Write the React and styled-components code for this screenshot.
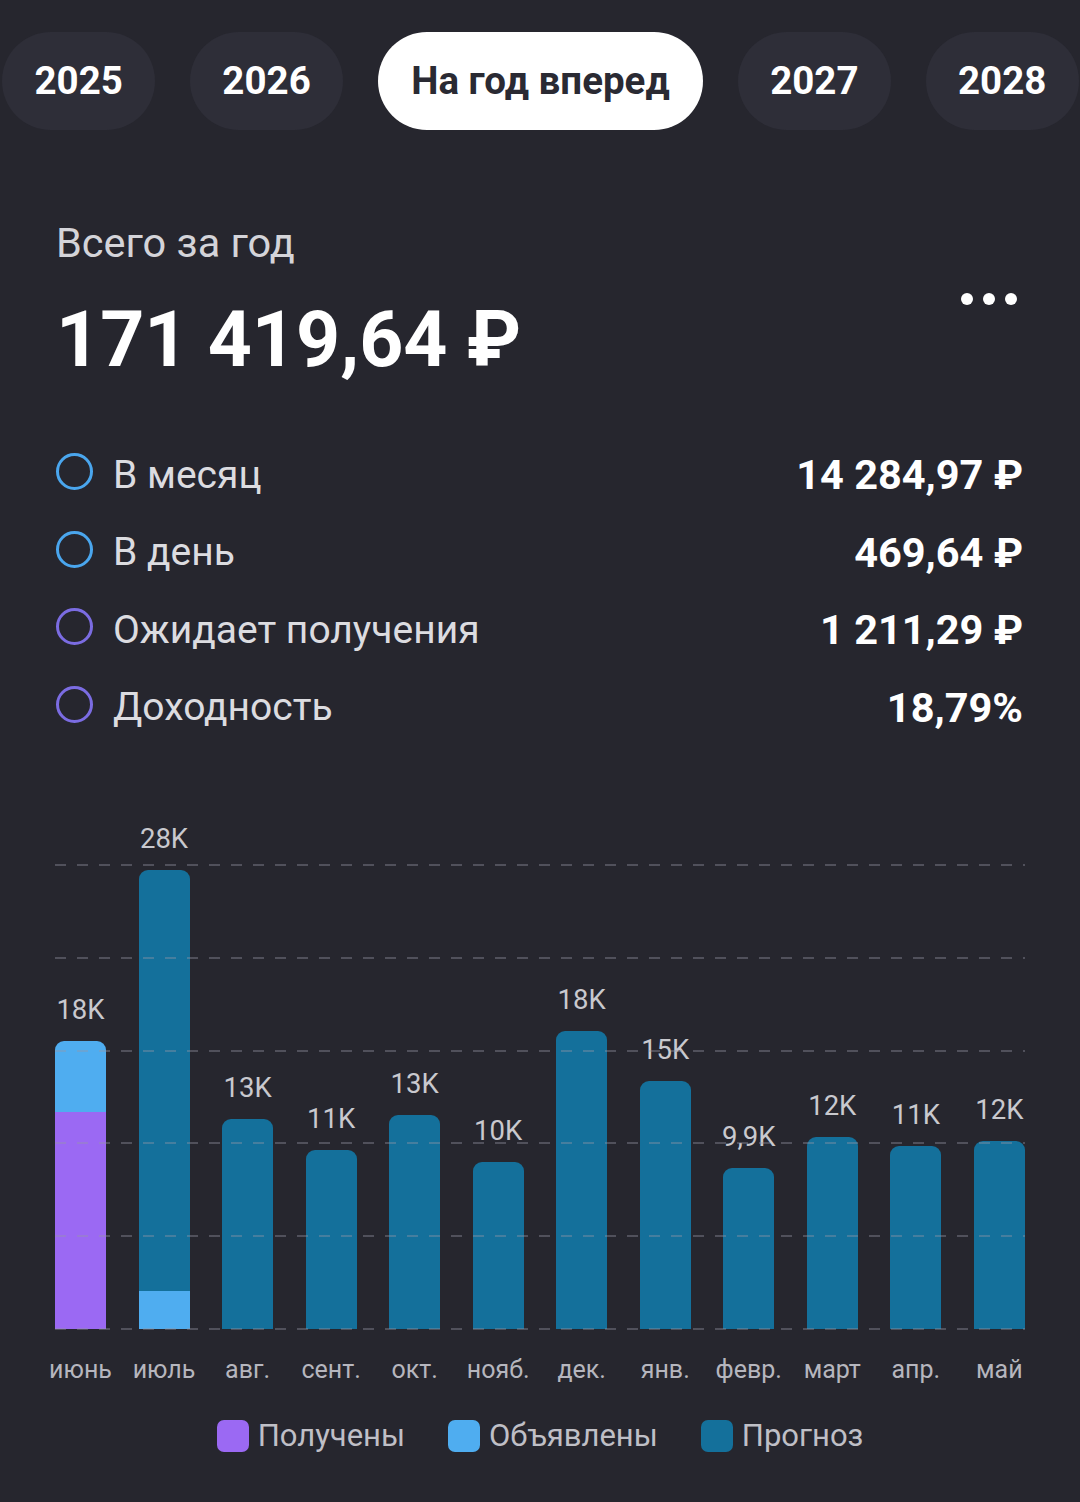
import React from 'react'
import styled, { createGlobalStyle } from 'styled-components'

const GlobalStyle = createGlobalStyle`
  html, body {
    margin: 0;
    padding: 0;
    background: #26262e;
  }
  body {
    font-family: Roboto, 'Noto Sans', sans-serif;
    -webkit-font-smoothing: antialiased;
  }
`

const COLORS = {
  received: '#9b69f3',
  declared: '#4fadf0',
  forecast: '#14709b',
}

const tabs = ['2025', '2026', 'На год вперед', '2027', '2028']

const stats = [
  { label: 'В месяц', value: '14 284,97 ₽', tone: '#4aa6ee' },
  { label: 'В день', value: '469,64 ₽', tone: '#4aa6ee' },
  { label: 'Ожидает получения', value: '1 211,29 ₽', tone: '#7b6ce2' },
  { label: 'Доходность', value: '18,79%', tone: '#7b6ce2' },
]

// segments go bottom -> top, heights in px of the plot
const months = [
  { month: 'июнь', label: '18K', parts: [['received', 217], ['declared', 71]] },
  { month: 'июль', label: '28K', parts: [['declared', 38], ['forecast', 421]] },
  { month: 'авг.', label: '13K', parts: [['forecast', 210]] },
  { month: 'сент.', label: '11K', parts: [['forecast', 179]] },
  { month: 'окт.', label: '13K', parts: [['forecast', 214]] },
  { month: 'нояб.', label: '10K', parts: [['forecast', 167]] },
  { month: 'дек.', label: '18K', parts: [['forecast', 298]] },
  { month: 'янв.', label: '15K', parts: [['forecast', 248]] },
  { month: 'февр.', label: '9,9K', parts: [['forecast', 161]] },
  { month: 'март', label: '12K', parts: [['forecast', 192]] },
  { month: 'апр.', label: '11K', parts: [['forecast', 183]] },
  { month: 'май', label: '12K', parts: [['forecast', 188]] },
]

const legend = [
  { key: 'received', title: 'Получены' },
  { key: 'declared', title: 'Объявлены' },
  { key: 'forecast', title: 'Прогноз' },
]

const Screen = styled.div`
  width: 1080px;
  min-height: 1502px;
  background: #26262e;
  color: #fff;
  overflow: hidden;
`

const Tabs = styled.nav`
  display: flex;
  gap: 34.5px;
  padding: 32px 0 0 2px;
  white-space: nowrap;
`

const Tab = styled.button`
  flex: none;
  height: 98px;
  padding: 0 ${p => (p.$active ? '33.5px' : '32.5px')};
  border: 0;
  border-radius: 49px;
  background: ${p => (p.$active ? '#ffffff' : '#2e2e38')};
  color: ${p => (p.$active ? '#2a2a33' : '#ffffff')};
  font: 700 38.5px/1 Roboto, sans-serif;
`

const Summary = styled.section`
  display: flex;
  align-items: center;
  justify-content: space-between;
  padding: 89px 63px 0 56px;
`

const Caption = styled.div`
  font-size: 41.5px;
  line-height: 48px;
  color: #d4d4d9;
`

const Total = styled.div`
  margin-top: 28px;
  font-size: 77px;
  line-height: 90px;
  font-weight: 700;
  color: #ffffff;
`

const More = styled.button`
  display: flex;
  gap: 10px;
  margin-bottom: 7px;
  padding: 0;
  border: 0;
  background: none;
  span {
    width: 12px;
    height: 12px;
    border-radius: 50%;
    background: #ffffff;
  }
`

const StatList = styled.ul`
  list-style: none;
  margin: 51px 0 0;
  padding: 0 57px 0 56px;
`

const StatRow = styled.li`
  display: flex;
  align-items: center;
  height: 77.5px;
`

const Ring = styled.span`
  flex: none;
  box-sizing: border-box;
  width: 37px;
  height: 37px;
  margin-top: -6px;
  border-radius: 50%;
  border: 3.5px solid ${p => p.$tone};
`

const StatLabel = styled.span`
  flex: 1;
  margin-left: 20px;
  font-size: 39px;
  color: #dcdce0;
`

const StatValue = styled.span`
  font-size: 41.5px;
  font-weight: 700;
  color: #ffffff;
`

const Chart = styled.div`
  position: relative;
  height: 509px;
  margin: 74px 55px 0;
`

const Grid = styled.div`
  position: absolute;
  left: 0;
  right: 0;
  top: 44px;
  bottom: -1px;
  display: flex;
  flex-direction: column;
  justify-content: space-between;
  pointer-events: none;
  z-index: 1;
`

const Dash = styled.div`
  height: 2px;
  background: repeating-linear-gradient(
    to right,
    rgba(150, 150, 165, 0.38) 0 11px,
    transparent 11px 22px
  );
`

const Bars = styled.div`
  display: flex;
  justify-content: space-between;
  align-items: flex-end;
  height: 100%;
`

const Column = styled.div`
  display: flex;
  flex-direction: column;
  align-items: center;
  width: 51px;
`

const BarValue = styled.div`
  margin-bottom: 16px;
  font-size: 27.5px;
  line-height: 30px;
  color: #c9c9ce;
  white-space: nowrap;
`

const Bar = styled.div`
  display: flex;
  flex-direction: column-reverse;
  width: 100%;
  border-radius: 9px 9px 0 0;
  overflow: hidden;
`

const Segment = styled.div`
  background: ${p => COLORS[p.$kind]};
`

const Months = styled.div`
  display: flex;
  justify-content: space-between;
  margin: 26px 55px 0;
`

const Month = styled.div`
  display: flex;
  justify-content: center;
  width: 51px;
  font-size: 25px;
  line-height: 30px;
  color: #b6b6be;
  white-space: nowrap;
`

const Legend = styled.div`
  display: flex;
  justify-content: center;
  gap: 43px;
  margin-top: 31px;
`

const LegendItem = styled.div`
  display: flex;
  align-items: center;
  gap: 9px;
  font-size: 31px;
  line-height: 40px;
  color: #bfbfc6;
`

const Swatch = styled.span`
  width: 32px;
  height: 32px;
  border-radius: 7px;
  background: ${p => COLORS[p.$kind]};
`

export default function App() {
  return (
    <Screen>
      <GlobalStyle />
      <Tabs>
        {tabs.map(t => (
          <Tab key={t} $active={t === 'На год вперед'}>
            {t}
          </Tab>
        ))}
      </Tabs>

      <Summary>
        <div>
          <Caption>Всего за год</Caption>
          <Total>171 419,64 ₽</Total>
        </div>
        <More aria-label='Ещё'>
          <span />
          <span />
          <span />
        </More>
      </Summary>

      <StatList>
        {stats.map(s => (
          <StatRow key={s.label}>
            <Ring $tone={s.tone} />
            <StatLabel>{s.label}</StatLabel>
            <StatValue>{s.value}</StatValue>
          </StatRow>
        ))}
      </StatList>

      <Chart>
        <Bars>
          {months.map(m => (
            <Column key={m.month}>
              <BarValue>{m.label}</BarValue>
              <Bar>
                {m.parts.map(([kind, h]) => (
                  <Segment key={kind} $kind={kind} style={{ height: h }} />
                ))}
              </Bar>
            </Column>
          ))}
        </Bars>
        <Grid>
          {[0, 1, 2, 3, 4, 5].map(i => (
            <Dash key={i} />
          ))}
        </Grid>
      </Chart>

      <Months>
        {months.map(m => (
          <Month key={m.month}>{m.month}</Month>
        ))}
      </Months>

      <Legend>
        {legend.map(l => (
          <LegendItem key={l.key}>
            <Swatch $kind={l.key} />
            {l.title}
          </LegendItem>
        ))}
      </Legend>
    </Screen>
  )
}
